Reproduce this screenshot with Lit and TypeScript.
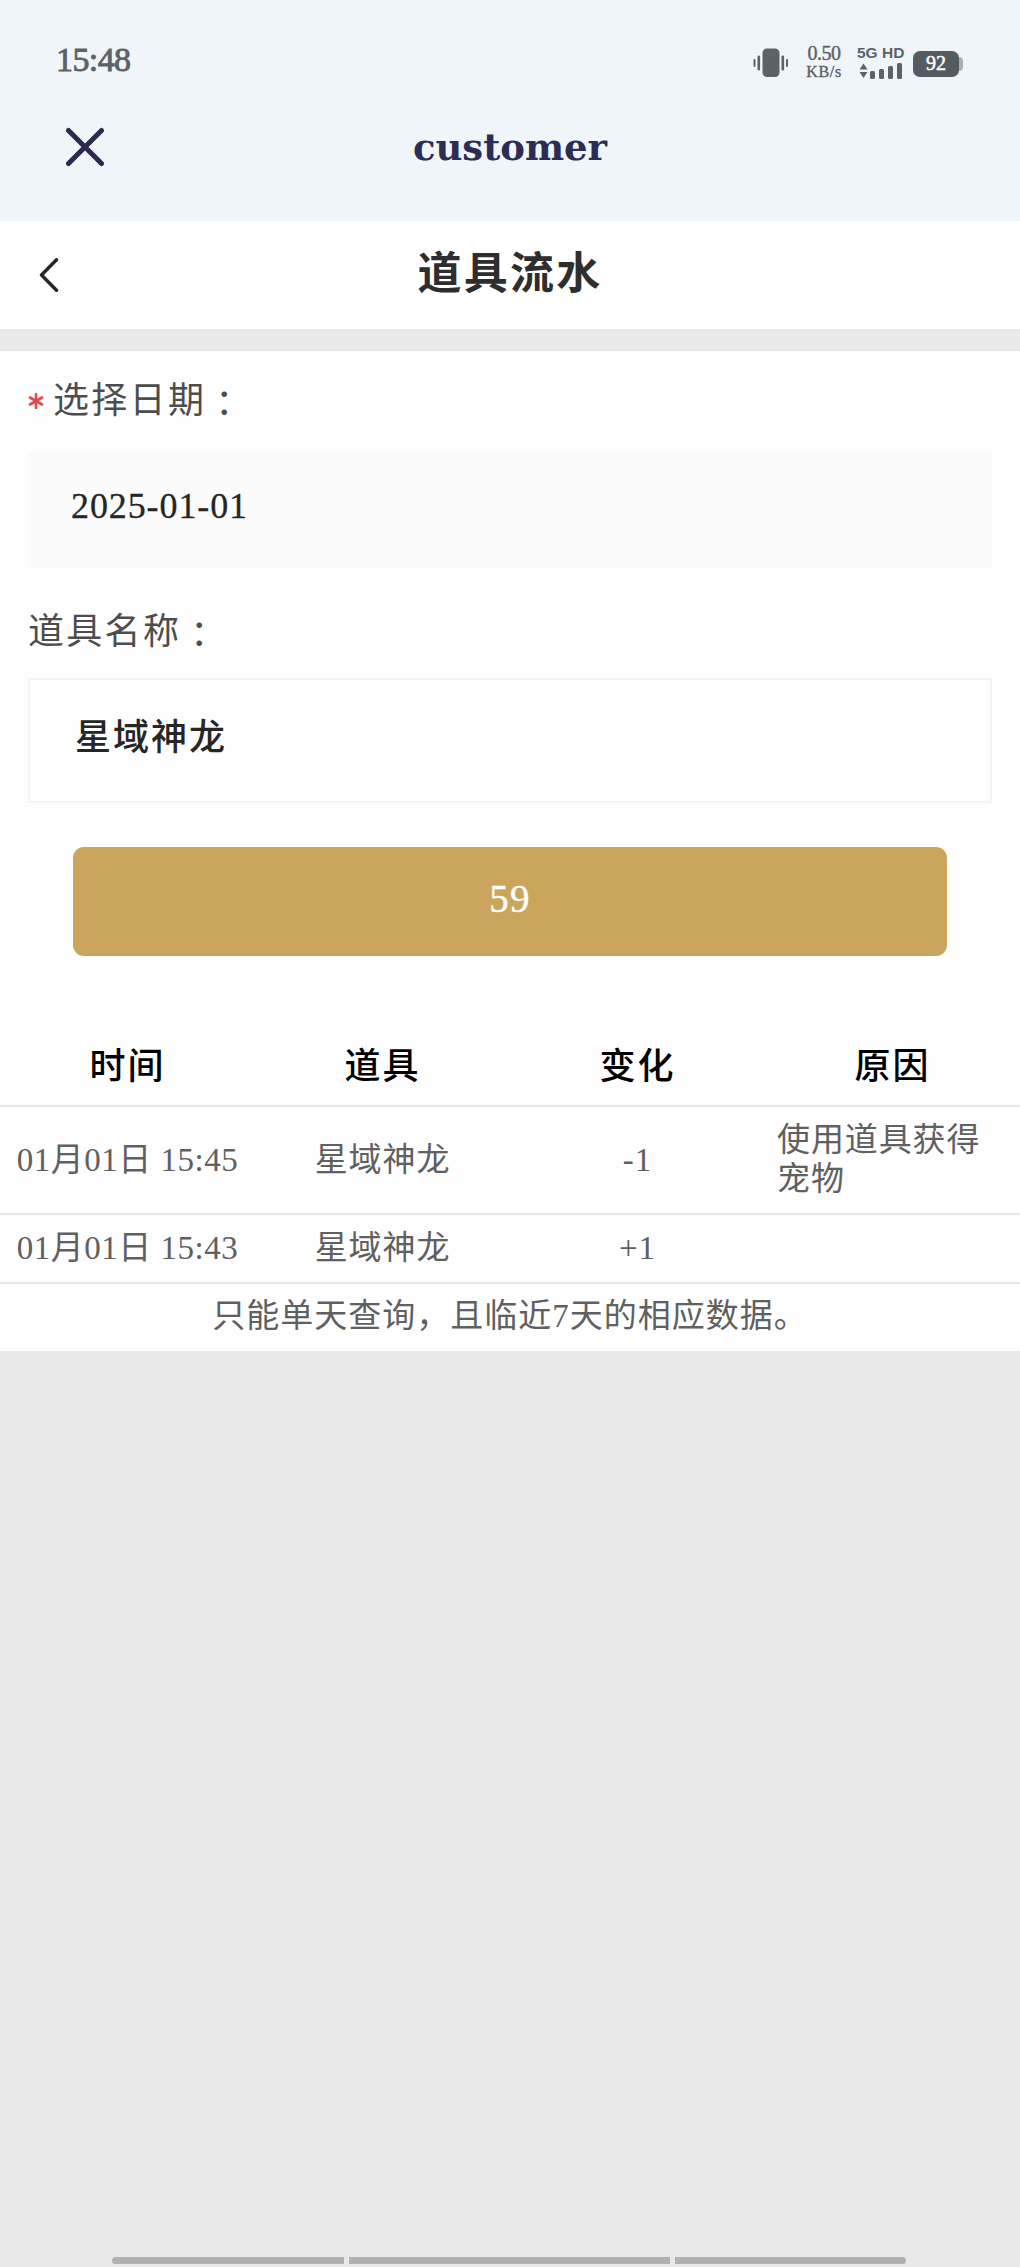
import { LitElement, html, css, svg } from "lit";
import { customElement, state } from "lit/decorators.js";

interface FlowRecord {
  time: string;
  item: string;
  change: string;
  reason: string;
}

@customElement("status-bar")
class StatusBar extends LitElement {
  static styles = css`
    :host {
      display: flex;
      align-items: flex-start;
      height: 104px;
      box-sizing: border-box;
      color: #5b6367;
      font-family: "Liberation Serif", serif;
    }
    .clock {
      margin: 41px 0 0 56px;
      font-size: 34px;
      line-height: 38px;
      letter-spacing: -0.6px;
      -webkit-text-stroke: 0.9px currentColor;
    }
    .icons {
      display: flex;
      align-items: flex-start;
      margin-left: auto;
      padding-right: 57px;
    }
    .vibrate {
      margin: 47px 14px 0 0;
    }
    .speed {
      width: 42px;
      margin-top: 43px;
      display: flex;
      flex-direction: column;
      align-items: center;
      white-space: nowrap;
      -webkit-text-stroke: 0.4px currentColor;
    }
    .rate {
      font-size: 20px;
      line-height: 20px;
      letter-spacing: -0.5px;
    }
    .unit {
      font-size: 16px;
      line-height: 18px;
      letter-spacing: 0.7px;
    }
    .network {
      width: 46px;
      margin: 44px 0 0 12px;
      display: flex;
      flex-direction: column;
      font-family: "Liberation Sans", sans-serif;
      font-weight: bold;
      font-size: 15.5px;
      line-height: 18px;
      white-space: nowrap;
    }
    .bars {
      margin-left: 2px;
    }
    .battery {
      display: flex;
      align-items: center;
      margin: 51px 0 0 10px;
    }
    .cell {
      width: 46px;
      height: 26px;
      border-radius: 7px;
      background: #555c61;
      color: #fff;
      font-size: 20px;
      line-height: 25px;
      text-align: center;
      -webkit-text-stroke: 0.5px currentColor;
    }
    .tip {
      width: 4px;
      height: 14px;
      border-radius: 0 4px 4px 0;
      background: #a9aeb2;
    }
    svg {
      display: block;
    }
  `;

  render() {
    return html`
      <span class="clock">15:48</span>
      <div class="icons">
        <svg class="vibrate" width="36" height="32" viewBox="0 0 36 32" fill="#5b6367">
          <rect x="9.5" y="1.5" width="17" height="28.5" rx="4.5" />
          <rect x="0.5" y="12" width="2" height="8" rx="1" />
          <rect x="4.5" y="8.5" width="2.6" height="15" rx="1.3" />
          <rect x="28.5" y="8.5" width="2.6" height="15" rx="1.3" />
          <rect x="33" y="12" width="2" height="8" rx="1" />
        </svg>
        <div class="speed">
          <span class="rate">0.50</span>
          <span class="unit">KB/s</span>
        </div>
        <div class="network">
          <span>5G HD</span>
          <svg class="bars" width="44" height="18" viewBox="0 0 44 18" fill="#5b6367">
            <path d="M4.5 1.5 L8.5 7.5 H0.5 Z" />
            <path d="M4.5 16 L8.5 10 H0.5 Z" />
            <rect x="11" y="9" width="5" height="8" rx="1.5" />
            <rect x="20" y="7" width="5" height="10" rx="1.5" />
            <rect x="29" y="4" width="5" height="13" rx="1.5" />
            <rect x="38" y="1" width="5" height="16" rx="1.5" />
          </svg>
        </div>
        <div class="battery">
          <div class="cell">92</div>
          <div class="tip"></div>
        </div>
      </div>
    `;
  }
}

@customElement("app-root")
class AppRoot extends LitElement {
  @state() private date = "2025-01-01";
  @state() private itemName = "星域神龙";
  @state() private records: FlowRecord[] = [
    { time: "01月01日 15:45", item: "星域神龙", change: "-1", reason: "使用道具获得宠物" },
    { time: "01月01日 15:43", item: "星域神龙", change: "+1", reason: "" },
  ];

  static styles = css`
    :host {
      display: flex;
      flex-direction: column;
      height: 2267px;
      box-sizing: border-box;
      overflow: hidden;
      background: #e9e9e9;
      font-family: "Liberation Serif", "Noto Sans CJK SC", serif;
    }
    .top {
      height: 221px;
      background: #f0f5f9;
    }
    .bar {
      display: grid;
      grid-template-columns: 1fr auto 1fr;
      align-items: center;
    }
    .host-bar {
      height: 86px;
    }
    .close {
      margin-left: 65px;
    }
    .host-title {
      font-family: "DejaVu Serif", serif;
      font-weight: bold;
      font-size: 37px;
      line-height: 86px;
      color: #2a2d55;
    }
    .page-bar {
      height: 108px;
      background: #fff;
    }
    .back {
      margin-left: 38px;
    }
    .page-title {
      font-size: 44px;
      letter-spacing: 2.2px;
      line-height: 106px;
      font-weight: bold;
      color: #2e2e2e;
    }
    .content {
      margin-top: 22px;
      height: 1000px;
      background: #fefefe;
      display: flex;
      flex-direction: column;
    }
    .label {
      margin-left: 28px;
      height: 100px;
      display: flex;
      align-items: center;
      font-size: 36px;
      line-height: 54px;
      letter-spacing: 2.3px;
      color: #4d4d4d;
    }
    .colon {
      font-family: "Noto Sans CJK TC", sans-serif;
    }
    .star {
      width: 25px;
      display: flex;
      align-items: center;
    }
    .field {
      margin: 0 28px;
      box-sizing: border-box;
      font-size: 36px;
      color: #262626;
    }
    .date {
      height: 117px;
      padding-left: 43px;
      background: #fbfbfb;
      letter-spacing: 0.9px;
      line-height: 111px;
      -webkit-text-stroke: 0.3px currentColor;
    }
    .name-label {
      height: 111px;
      padding-top: 18px;
      box-sizing: border-box;
    }
    .name {
      height: 125px;
      padding-left: 45px;
      border: 2px solid #f4f4f4;
      letter-spacing: 2px;
      line-height: 117px;
      font-weight: 500;
    }
    .submit {
      margin: 44px 73px 0;
      height: 109px;
      flex: none;
      border: 0;
      padding: 0 0 6px;
      border-radius: 11px;
      background: #cba55c;
      color: #fff;
      font-family: inherit;
      font-size: 39px;
      letter-spacing: 1.2px;
      -webkit-text-stroke: 0.4px currentColor;
    }
    .table {
      margin-top: 74px;
      display: flex;
      flex-direction: column;
    }
    .row {
      display: grid;
      grid-template-columns: repeat(4, 1fr);
      align-items: center;
      padding: 14px 0;
      border-bottom: 2px solid #e8e8e8;
      font-size: 33px;
      line-height: 39px;
      letter-spacing: 0.9px;
      color: #606060;
      text-align: center;
    }
    .head {
      height: 75px;
      padding: 0;
      font-size: 36px;
      letter-spacing: 2px;
      font-weight: 500;
      color: #000;
    }
    .reason {
      padding: 0 12px;
      text-align: left;
      line-break: anywhere;
    }
    .time {
      white-space: nowrap;
      letter-spacing: 0.5px;
    }
    .note {
      height: 67px;
      line-height: 65px;
      font-size: 33px;
      letter-spacing: 1px;
      color: #606060;
      text-align: center;
    }
    .gesture {
      margin: auto 114px 3px 112px;
      display: grid;
      grid-template-columns: 232px 321px 1fr;
      gap: 5px;
    }
    .seg {
      height: 7px;
      background: #b1b1b1;
    }
    .seg:first-child {
      border-radius: 4px 0 0 4px;
    }
    .seg:last-child {
      border-radius: 0 4px 4px 0;
    }
    svg {
      display: block;
    }
  `;

  private renderRecord(r: FlowRecord) {
    return html`
      <div class="row">
        <span class="time">${r.time}</span>
        <span>${r.item}</span>
        <span>${r.change}</span>
        <span class="reason">${r.reason}</span>
      </div>
    `;
  }

  render() {
    const arms = [0, 60, 120].map(
      (a) => svg`<path d="M8 1 V15" transform="rotate(${a} 8 8)" />`
    );
    return html`
      <header class="top">
        <status-bar></status-bar>
        <div class="bar host-bar">
          <svg class="close" width="40" height="40" viewBox="0 0 40 40" fill="none" stroke="#2c2950" stroke-width="5" stroke-linecap="round">
            <path d="M3.5 3.5 L36.5 36.5 M36.5 3.5 L3.5 36.5" />
          </svg>
          <span class="host-title">customer</span>
        </div>
      </header>
      <nav class="bar page-bar">
        <svg class="back" width="22" height="34" viewBox="0 0 22 34" fill="none" stroke="#262626" stroke-width="3.4" stroke-linecap="round" stroke-linejoin="round">
          <path d="M18.5 1.8 L3.5 17 L18.5 32.2" />
        </svg>
        <span class="page-title">道具流水</span>
      </nav>
      <main class="content">
        <div class="label">
          <span class="star">
            <svg width="16" height="16" viewBox="0 0 16 16" stroke="#e5484d" stroke-width="2.6" stroke-linecap="round">${arms}</svg>
          </span>
          选择日期<span class="colon">：</span>
        </div>
        <div class="field date">${this.date}</div>
        <div class="label name-label">道具名称<span class="colon">：</span></div>
        <div class="field name">${this.itemName}</div>
        <button class="submit">59</button>
        <section class="table">
          <div class="row head">
            <span>时间</span><span>道具</span><span>变化</span><span>原因</span>
          </div>
          ${this.records.map((r) => this.renderRecord(r))}
          <div class="note">只能单天查询，且临近7天的相应数据。</div>
        </section>
      </main>
      <div class="gesture">
        <div class="seg"></div>
        <div class="seg"></div>
        <div class="seg"></div>
      </div>
    `;
  }
}
